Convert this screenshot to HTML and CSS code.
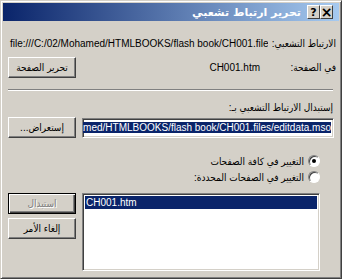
FILE: index.html
```html
<!DOCTYPE html>
<html lang="ar" dir="rtl">
<head>
    <meta charset="UTF-8">
    <title>تحرير ارتباط تشعبي</title>
    <link rel="stylesheet" href="styles.css">
</head>
<body>
    <div class="window">
        <!-- شريط العنوان -->
        <div class="titlebar">
            <span class="tb-btn close">&times;</span>
            <span class="tb-btn help">?</span>
            <span class="title">تحرير ارتباط تشعبي</span>
        </div>

        <div class="content">
            <div class="info-row link-row">
                <span class="label">الارتباط التشعبي:</span>
                <span class="path">file:///C:/02/Mohamed/HTMLBOOKS/flash book/CH001.files/editdata.mso</span>
            </div>

            <div class="info-row page-row">
                <span class="label">في الصفحة:</span>
                <span class="page-name">CH001.htm</span>
                <button class="button">تحرير الصفحة</button>
            </div>

            <div class="separator"></div>

            <div class="field-label">إستبدال الارتباط التشعبي بـ:</div>
            <div class="replace-row">
                <div class="textbox"><span class="selected-text">amed/HTMLBOOKS/flash book/CH001.files/editdata.mso</span></div>
                <button class="button">إستعراض...</button>
            </div>

            <div class="options">
                <label class="option"><span class="radio checked"></span>التغيير في كافة الصفحات</label>
                <label class="option"><span class="radio"></span>التغيير في الصفحات المحددة:</label>
            </div>

            <div class="bottom">
                <div class="listbox">
                    <div class="list-item selected">CH001.htm</div>
                </div>
                <div class="actions">
                    <button class="button default" disabled>استبدال</button>
                    <button class="button">إلغاء الأمر</button>
                </div>
            </div>
        </div>
    </div>
</body>
</html>
```

FILE: styles.css
```css
* {
    box-sizing: border-box;
}

body {
    margin: 0;
    background-color: #d4d0c8;
    font-family: "Liberation Sans", "DejaVu Sans Condensed", "DejaVu Sans", sans-serif;
    font-size: 10px;
    color: #000;
}

.window {
    width: 342px;
    height: 279px;
    background-color: #d4d0c8;
    border: 1px solid;
    border-color: #d4d0c8 #404040 #404040 #d4d0c8;
    box-shadow: inset 1px 1px #fff, inset -1px -1px #808080;
    padding: 2px;
}

/* Title bar */
.titlebar {
    height: 18px;
    display: flex;
    align-items: center;
    padding: 0 6px 0 3px;
    background: linear-gradient(to right, #0a246a, #a6caf0);
}

.title {
    color: #fff;
    font-family: "DejaVu Sans", sans-serif;
    font-weight: bold;
    font-size: 11px;
    margin-right: 6px;
    white-space: nowrap;
}

.tb-btn {
    width: 13px;
    height: 14px;
    display: flex;
    align-items: center;
    justify-content: center;
    background-color: #d4d0c8;
    border: 1px solid;
    border-color: #fff #404040 #404040 #fff;
    font-family: "DejaVu Sans", sans-serif;
    font-weight: bold;
    font-size: 11px;
    line-height: 1;
    color: #000;
}

.tb-btn.close {
    font-size: 14px;
}

/* Content */
.content {
    padding: 16px 3px 0 5px;
}

.info-row {
    display: grid;
    grid-template-columns: 76px 1fr;
    align-items: center;
    height: 14px;
    line-height: 14px;
}

.link-row {
    grid-template-columns: max-content 1fr;
    column-gap: 4px;
}

.label {
    white-space: nowrap;
}

.path {
    direction: ltr;
    text-align: left;
    white-space: nowrap;
    overflow: hidden;
    padding-left: 2px;
}

.page-row {
    grid-template-columns: 76px 1fr 68px;
    height: 21px;
    margin-top: 6px;
}

.page-name {
    direction: ltr;
    text-align: right;
}

.button {
    width: 68px;
    height: 21px;
    padding: 0;
    font-family: inherit;
    font-size: 10px;
    color: #000;
    background-color: #d4d0c8;
    border: 1px solid;
    border-color: #fff #404040 #404040 #fff;
    box-shadow: inset -1px -1px #808080;
}

.button:disabled {
    color: #808080;
    text-shadow: 1px 1px #fff;
}

.button.default {
    border: 1px solid #000;
    box-shadow: inset 1px 1px #fff, inset -1px -1px #404040, inset -2px -2px #808080;
}

.separator {
    height: 2px;
    margin: 11px 3px 0 0;
    border-top: 1px solid #808080;
    border-bottom: 1px solid #fff;
}

.field-label {
    margin-top: 10px;
    height: 14px;
    line-height: 14px;
    padding-right: 3px;
}

.replace-row {
    display: flex;
    align-items: center;
    gap: 6px;
    margin-top: 2px;
    height: 21px;
}

.textbox {
    width: 252px;
    height: 20px;
    margin-right: 2px;
    background-color: #fff;
    border: 1px solid;
    border-color: #808080 #fff #fff #808080;
    box-shadow: inset 1px 1px #404040, inset -1px -1px #d4d0c8;
    overflow: hidden;
    white-space: nowrap;
    padding: 2px 2px 0;
    line-height: 14px;
}

.selected-text {
    direction: ltr;
    unicode-bidi: isolate;
    background-color: #0a246a;
    color: #fff;
}

.options {
    margin-top: 16px;
    margin-right: 16px;
    display: flex;
    flex-direction: column;
    gap: 2px;
}

.option {
    display: flex;
    align-items: center;
    gap: 4px;
    height: 14px;
}

.radio {
    width: 12px;
    height: 12px;
    border-radius: 50%;
    background-color: #fff;
    border: 1px solid;
    border-color: #808080 #fff #fff #808080;
    box-shadow: inset 1px 1px #404040;
    display: flex;
    align-items: center;
    justify-content: center;
}

.radio.checked::after {
    content: "";
    width: 4px;
    height: 4px;
    border-radius: 50%;
    background-color: #000;
}

.bottom {
    display: flex;
    gap: 6px;
    margin-top: 9px;
    margin-right: 16px;
}

.listbox {
    width: 238px;
    height: 78px;
    background-color: #fff;
    border: 1px solid;
    border-color: #808080 #fff #fff #808080;
    box-shadow: inset 1px 1px #404040, inset -1px -1px #d4d0c8;
    padding: 2px;
    direction: ltr;
}

.list-item {
    height: 13px;
    line-height: 13px;
    padding-left: 1px;
}

.list-item.selected {
    background-color: #0a246a;
    color: #fff;
}

.actions {
    display: flex;
    flex-direction: column;
    gap: 4px;
}
```
